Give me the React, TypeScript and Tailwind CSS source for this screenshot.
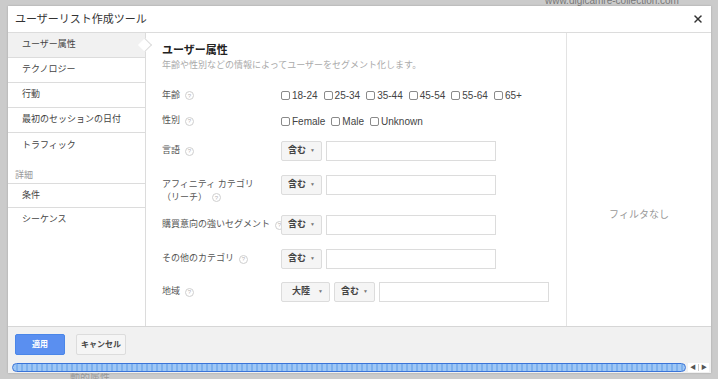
import { X } from "lucide-react";

const font = {
  fontFamily: '"Liberation Sans", Arial, "Noto Sans CJK JP", sans-serif',
};

function Help() {
  return (
    <span className="ml-[5px] inline-flex h-[9px] w-[9px] shrink-0 items-center justify-center rounded-full border border-[#cfcfcf] text-[6px] leading-none text-[#b5b5b5]">
      ?
    </span>
  );
}

function Check({ label }: { label: string }) {
  return (
    <label className="mr-[6px] flex shrink-0 items-center gap-[2px] whitespace-nowrap text-[10px] text-[#444]">
      <span className="h-[9px] w-[9px] rounded-[2px] border border-[#8a8a8a] bg-white" />
      {label}
    </label>
  );
}

function Select({ label, w }: { label: string; w: string }) {
  return (
    <div
      className={`${w} relative z-10 flex h-[20px] shrink-0 items-center justify-between rounded-[2px] border border-[#dcdcdc] bg-[#f5f5f5] pr-[6px] text-[9px] font-bold text-[#444]`}
    >
      <span>{label}</span>
      <span className="text-[5px] text-[#777]">▼</span>
    </div>
  );
}

function Input({ w }: { w: string }) {
  return <div className={`${w} h-[20px] shrink-0 border border-[#dcdcdc] bg-white`} />;
}

function Label({ text }: { text: string }) {
  return (
    <div className="flex h-[20px] w-[119px] shrink-0 items-center whitespace-nowrap text-[9px] text-[#555]">
      {text}
      <Help />
    </div>
  );
}

function Controls({ children }: { children: React.ReactNode }) {
  return <div className="flex items-center gap-[4px]">{children}</div>;
}

const sideItems = ["テクノロジー", "行動", "最初のセッションの日付"];

export default function App() {
  return (
    <div
      className="flex h-[379px] w-[718px] flex-col overflow-hidden bg-[#cbcbcb]"
      style={font}
    >
      {/* top strip */}
      <div className="h-[6px] shrink-0 overflow-hidden">
        <div className="mt-[-7px] pl-[545px] text-[10px] text-[#777]">
          www.digicamre-collection.com
        </div>
      </div>

      {/* dialog */}
      <div className="ml-[8px] flex w-[703px] flex-col bg-white shadow-[0_0_2px_rgba(0,0,0,0.2)]">
        <div className="flex h-[27px] items-center justify-between border-b border-[#dcdcdc] pl-[7px] pr-[7px]">
          <span className="text-[11px] text-[#333]">ユーザーリスト作成ツール</span>
          <X size={12} strokeWidth={3} className="text-[#333]" />
        </div>

        <div className="flex h-[293px]">
          {/* sidebar */}
          <div className="relative w-[138px] shrink-0 border-r border-[#dcdcdc]">
            <div className="relative flex h-[25px] items-center border-b border-[#dcdcdc] bg-[#f1f1f1] pl-[14px] text-[9px] text-[#444]">
              ユーザー属性
              <span className="absolute right-[-5px] top-[7px] h-[10px] w-[10px] rotate-45 border-r border-t border-[#dcdcdc] bg-white" />
            </div>
            {sideItems.map((s) => (
              <div
                key={s}
                className="flex h-[25px] items-center border-b border-[#dcdcdc] pl-[14px] text-[9px] text-[#444]"
              >
                {s}
              </div>
            ))}
            <div className="flex h-[25px] items-center pl-[14px] text-[9px] text-[#444]">
              トラフィック
            </div>
            <div className="flex h-[25px] items-end pb-[1px] pl-[7px] text-[9px] text-[#999]">
              詳細
            </div>
            <div className="flex h-[25px] items-center border-b border-t border-[#dcdcdc] pl-[14px] text-[9px] text-[#444]">
              条件
            </div>
            <div className="flex h-[24px] items-center pl-[14px] text-[9px] text-[#444]">
              シーケンス
            </div>
          </div>

          {/* main */}
          <div className="flex w-[421px] shrink-0 flex-col border-r border-[#e3e3e3] pl-[16px] pt-[10px]">
            <div className="text-[11px] font-bold leading-[14px] text-[#222]">ユーザー属性</div>
            <div className="mt-[2px] text-[9px] leading-[12px] text-[#aaa]">
              年齢や性別などの情報によってユーザーをセグメント化します。
            </div>

            <div className="mt-[12px] flex h-[25px] items-center">
              <Label text="年齢" />
              {["18-24", "25-34", "35-44", "45-54", "55-64", "65+"].map((a) => (
                <Check key={a} label={a} />
              ))}
            </div>
            <div className="flex h-[26px] items-center">
              <Label text="性別" />
              <Check label="Female" />
              <Check label="Male" />
              <Check label="Unknown" />
            </div>

            <div className="mt-[7px] flex items-start">
              <Label text="言語" />
              <Controls>
                <Select label="含む" w="w-[41px] pl-[6px]" />
                <Input w="w-[170px]" />
              </Controls>
            </div>

            <div className="mt-[14px] flex h-[28px] items-start">
              <div className="w-[119px] shrink-0 pt-[3px] text-[9px] leading-[13px] text-[#555]">
                アフィニティ カテゴリ
                <div className="flex items-center">
                  （リーチ）
                  <Help />
                </div>
              </div>
              <Controls>
                <Select label="含む" w="w-[41px] pl-[6px]" />
                <Input w="w-[170px]" />
              </Controls>
            </div>

            <div className="mt-[12px] flex items-start">
              <Label text="購買意向の強いセグメント" />
              <Controls>
                <Select label="含む" w="w-[41px] pl-[6px]" />
                <Input w="w-[170px]" />
              </Controls>
            </div>

            <div className="mt-[14px] flex items-start">
              <Label text="その他のカテゴリ" />
              <Controls>
                <Select label="含む" w="w-[41px] pl-[6px]" />
                <Input w="w-[170px]" />
              </Controls>
            </div>

            <div className="mt-[13px] flex items-start">
              <Label text="地域" />
              <Controls>
                <Select label="大陸" w="w-[49px] pl-[10px]" />
                <Select label="含む" w="w-[41px] pl-[6px]" />
                <Input w="w-[170px]" />
              </Controls>
            </div>
          </div>

          {/* filter panel */}
          <div className="flex flex-1 justify-center pt-[174px] text-[10px] text-[#999]">
            フィルタなし
          </div>
        </div>

        {/* footer */}
        <div className="flex h-[36px] items-center gap-[11px] border-t border-[#d6d6d6] bg-[#f1f1f1] pl-[7px]">
          <button className="flex h-[21px] w-[50px] items-center justify-center rounded-[2px] border border-[#4a86e8] bg-[#5a8ff0] text-[8px] font-bold text-white">
            適用
          </button>
          <button className="flex h-[21px] w-[50px] items-center justify-center rounded-[2px] border border-[#dcdcdc] bg-[#f5f5f5] text-[8px] font-bold text-[#444]">
            キャンセル
          </button>
        </div>

        {/* scrollbar */}
        <div className="flex h-[11px] items-center bg-[#f1f1f1] pl-[4px] pr-[2px]">
          <div className="h-[9px] flex-1 rounded-full border border-[#3a74d8] bg-[repeating-linear-gradient(90deg,#9fc7f5_0px,#9fc7f5_3px,#7db1ee_3px,#7db1ee_5px)]" />
          <div className="ml-[2px] flex h-[9px] items-center bg-white text-[6px] text-[#555]">
            <span className="w-[10px] text-center">◀</span>
            <span className="h-[7px] w-px bg-[#ccc]" />
            <span className="w-[10px] text-center">▶</span>
          </div>
        </div>
      </div>

      <div className="flex h-[8px] overflow-hidden">
        <div className="ml-[70px] mt-[-3px] text-[10px] text-[#999]">動的属性</div>
      </div>
    </div>
  );
}
